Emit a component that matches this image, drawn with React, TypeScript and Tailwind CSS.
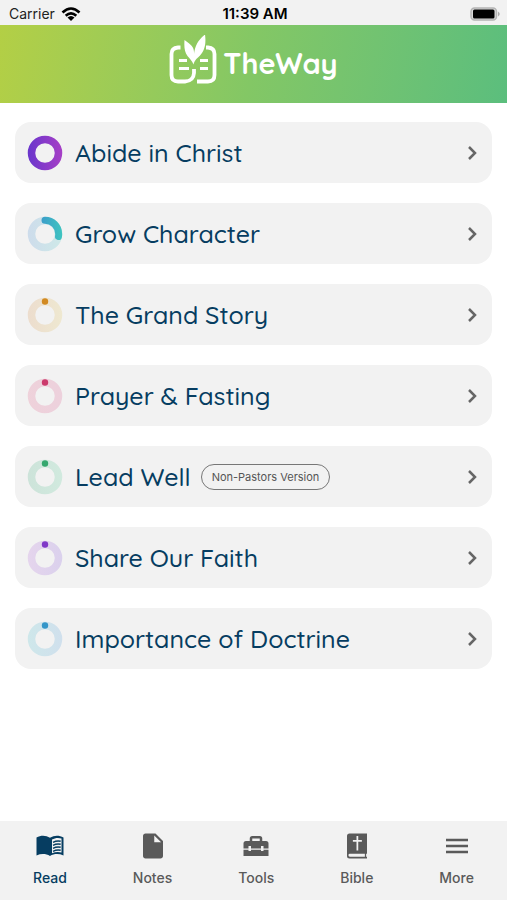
import { MdInsertDriveFile } from "react-icons/md";
import type { ReactNode } from "react";

interface Course {
  title: string;
  from: string;
  to: string;
  dot: string;
  progress: number;
  tag?: string;
}

const COURSES: Course[] = [
  { title: "Abide in Christ", from: "#6a36cc", to: "#a63fc6", dot: "#8a3bc9", progress: 1 },
  { title: "Grow Character", from: "#3a84d0", to: "#3fc4c0", dot: "#3f9fca", progress: 0.28 },
  { title: "The Grand Story", from: "#d5893d", to: "#e0c04a", dot: "#d28a22", progress: 0 },
  { title: "Prayer & Fasting", from: "#e0507c", to: "#d84c86", dot: "#cc3a6c", progress: 0 },
  { title: "Lead Well", from: "#38a878", to: "#4cc890", dot: "#35a76e", progress: 0, tag: "Non-Pastors Version" },
  { title: "Share Our Faith", from: "#b060d8", to: "#7c4cd8", dot: "#8038c8", progress: 0 },
  { title: "Importance of Doctrine", from: "#40bccc", to: "#4898d8", dot: "#3496c8", progress: 0 },
];

function ProgressRing({ course, id }: { course: Course; id: string }) {
  const { from, to, dot, progress } = course;

  return (
    <svg viewBox="0 0 36 36" className="size-9 shrink-0" fill="none" aria-hidden="true">
      <defs>
        <linearGradient id={id} x1="1" y1="18" x2="35" y2="18" gradientUnits="userSpaceOnUse">
          <stop stopColor={from} />
          <stop offset="1" stopColor={to} />
        </linearGradient>
      </defs>
      <circle cx="18" cy="18" r="13.5" stroke={`url(#${id})`} strokeWidth="7.5" opacity={progress === 1 ? 1 : 0.2} />
      {progress > 0 && progress < 1 && (
        <path
          d="M18 4.300a13.700 13.700 0 0 1 0 27.400a13.700 13.700 0 0 1 0-27.400"
          pathLength="1"
          stroke={`url(#${id})`}
          strokeWidth="7"
          strokeLinecap="round"
          strokeDasharray={`${progress} 1`}
        />
      )}
      {progress === 0 && <circle cx="18" cy="4.5" r="3.2" fill={dot} />}
    </svg>
  );
}

function Logo() {
  return (
    <svg viewBox="0 0 48 50" className="h-[50px] w-12" fill="none" aria-hidden="true">
      <g stroke="#fff" strokeWidth="3.8">
        <path d="M11.500 12.500H9Q2.500 13 2.500 19V40Q2.500 46.500 9 46.500H16Q24.500 46 25 38V34" />
        <path d="M37 12.500H39Q45.500 13 45.500 19V40Q45.500 46.500 39 46.500H28" />
      </g>
      <path d="M10 25.500h8M10 33.500h10M31 25.500h8M31 33.500h8" stroke="#fff" strokeWidth="2.800" />
      <path d="M15.500 5C23 10 25.500 13 25 19C26 11 29 5 36 -.5C37.500 10 35 17 29.500 22C26 25 25 27 24.500 29.500C23 25.500 21 24 18.500 21C15.500 17 15 12 15.500 5Z" fill="#fff" />
    </svg>
  );
}

function BookIcon() {
  return (
    <svg viewBox="0 0 30 30" className="size-[30px]" fill="none" aria-hidden="true">
      <path d="M1.500 6.500C6 4 11 4.200 15 6.800C19 4.200 24 4 28.500 6.500V24.500C24 22.500 19 22.600 15 25C11 22.600 6 22.500 1.500 24.500Z" fill="currentColor" />
      <path d="M17 8.600C20 6.700 23.500 6.500 26.500 7.500V21.500C23.500 20.500 20 20.800 17 22.300Z" fill="#f2f2f2" />
      <path d="M18 11.300Q22 9.300 25.700 10.300M18 14.300Q22 12.300 25.700 13.300M18 17.300Q22 15.300 25.700 16.300M18 20.300Q22 18.300 25.700 19.300" stroke="currentColor" strokeWidth="1.500" />
    </svg>
  );
}

function ToolboxIcon() {
  return (
    <svg viewBox="0 0 24 24" className="size-[30px]" fill="currentColor" aria-hidden="true">
      <path d="M18 16h-2v-1H8v1H6v-1H2v5h20v-5h-4v1zM20 8h-3V6a2 2 0 0 0-2-2H9a2 2 0 0 0-2 2v2H4a2 2 0 0 0-2 2v4h4v-2h2v2h8v-2h2v2h4v-4a2 2 0 0 0-2-2zm-5 0H9V6h6v2z" />
    </svg>
  );
}

function BibleIcon() {
  return (
    <svg viewBox="0 0 24 24" className="size-[30px]" fill="currentColor" aria-hidden="true">
      <path
        fillRule="evenodd"
        d="M6 2H20v16.200h-.7v2.300h.7V22H6A2 2 0 0 1 4 20V4A2 2 0 0 1 6 2zm.3 16.200a1.150 1.150 0 0 0 0 2.300H18.300v-2.300zM11.600 4V7.200H8.700V8.600h2.900V15.500h1.400V8.600h2.900V7.200H13V4z"
      />
    </svg>
  );
}

function MenuIcon() {
  return (
    <svg viewBox="0 0 30 30" className="size-[30px]" stroke="currentColor" strokeWidth="2.300" aria-hidden="true">
      <path d="M4 9h22M4 15h22M4 21h22" />
    </svg>
  );
}

const TABS: { label: string; icon: ReactNode }[] = [
  { label: "Read", icon: <BookIcon /> },
  { label: "Notes", icon: <MdInsertDriveFile size={30} /> },
  { label: "Tools", icon: <ToolboxIcon /> },
  { label: "Bible", icon: <BibleIcon /> },
  { label: "More", icon: <MenuIcon /> },
];

function StatusBar() {
  return (
    <div className="grid h-[25px] grid-cols-3 items-center bg-[#f2f2f2] pt-0.5 pr-1.5 pl-[9px] font-['Inter',sans-serif] text-sm text-black">
      <div className="flex items-center gap-1.5 text-[#222]">
        Carrier
        <svg viewBox="0 0 20 14" className="h-3.5 w-5" fill="none" stroke="#000" strokeWidth="2.600" aria-hidden="true">
          <path d="M1.500 5.500Q10-2.500 18.500 5.500M4.700 8.800Q10 4 15.300 8.800" />
          <path d="M6.500 10.500Q10 7.500 13.500 10.500L10 14Z" fill="#000" stroke="none" />
        </svg>
      </div>
      <div className="text-center text-[15px] font-semibold whitespace-nowrap">11:39 AM</div>
      <svg viewBox="0 0 31 14" className="h-3.5 w-[31px] justify-self-end" aria-hidden="true">
        <rect x="1" y="1" width="25.500" height="12" rx="3.500" fill="#d8d8d8" stroke="#b4b4b4" strokeWidth="1.500" />
        <rect x="3" y="2.500" width="21.500" height="9" rx="1.500" fill="#000" />
        <path d="M28 4.500Q31.500 7 28 9.500Z" fill="#aaa" />
      </svg>
    </div>
  );
}

export default function App() {
  return (
    <div className="flex min-h-screen flex-col bg-white">
      <StatusBar />
      <header className="flex h-[78px] items-center justify-center gap-1.5 bg-linear-100 from-[#b3cf45] via-[#83c765] to-[#5bbe7d] pb-2">
        <Logo />
        <h1 className="pt-2 font-['Quicksand','Lato',sans-serif] text-[29px] font-bold text-white">TheWay</h1>
      </header>

      <main className="flex flex-1 flex-col gap-5 px-[15px] pt-[19px]">
        {COURSES.map((course, index) => (
          <button
            key={course.title}
            type="button"
            className="flex h-[61px] items-center rounded-2xl bg-[#f2f2f2] px-3 text-left"
          >
            <ProgressRing course={course} id={`ring-${index}`} />
            <span className="ml-3 font-['Quicksand','Lato',sans-serif] text-[25px] font-medium text-[#063d61]">
              {course.title}
            </span>
            {course.tag && (
              <span className="ml-2.5 rounded-full border border-[#777] px-2.5 py-1 font-['Inter',sans-serif] text-[11px] leading-4 text-[#555]">
                {course.tag}
              </span>
            )}
            <svg viewBox="0 0 16 16" className="ml-auto size-4" fill="none" stroke="#666" strokeWidth="2.500" aria-hidden="true">
              <path d="M5 2l6 6-6 6" />
            </svg>
          </button>
        ))}
      </main>

      <nav className="flex h-[79px] justify-between bg-[#f2f2f2] px-[33px] pt-2.5 font-['Inter',sans-serif] text-sm font-medium">
        {TABS.map((tab) => (
          <button
            key={tab.label}
            type="button"
            className={`flex flex-col items-center gap-[7px] ${tab.label === "Read" ? "text-[#063d61]" : "text-[#5a5a5a]"}`}
          >
            {tab.icon}
            {tab.label}
          </button>
        ))}
      </nav>
    </div>
  );
}
